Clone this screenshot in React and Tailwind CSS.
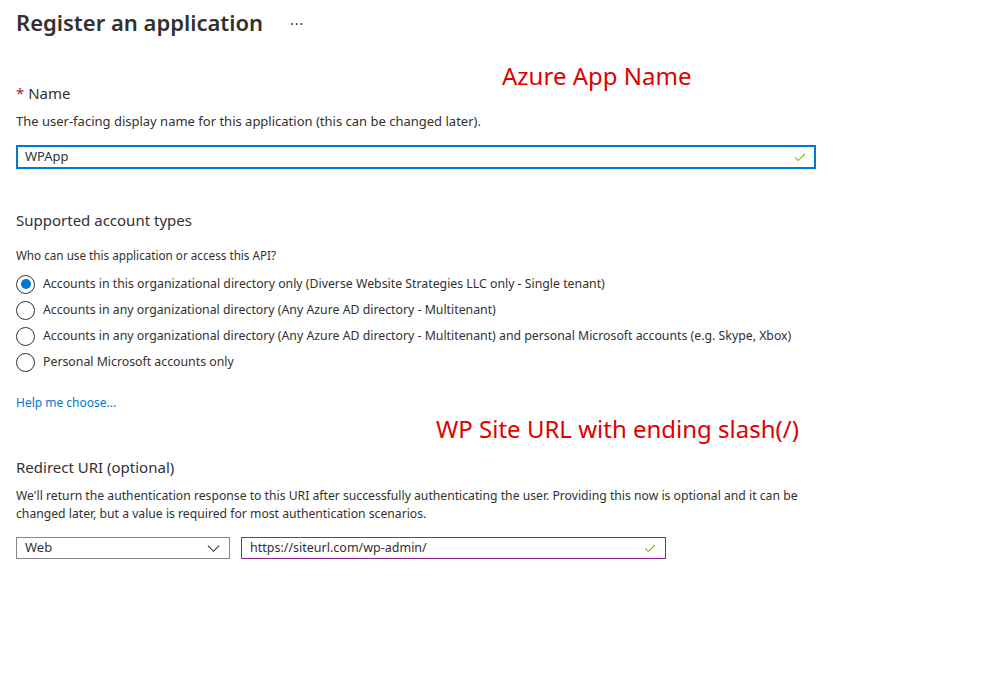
import React from "react";

const font = { fontFamily: '"Segoe UI", "Noto Sans", sans-serif' };

const Check = () => (
  <svg width="14" height="14" viewBox="0 0 16 16" className="shrink-0">
    <path d="M2.5 8.5l3.5 3.5 7.5-7.5" fill="none" stroke="#6bb700" strokeWidth="1.2" />
  </svg>
);

const Radio = ({ checked, label }) => (
  <label className="flex items-center gap-[8px] h-[26px]">
    <span className="w-[19px] h-[19px] rounded-full border border-[#323130] flex items-center justify-center">
      {checked && <span className="w-[10px] h-[10px] rounded-full bg-[#0078d4]" />}
    </span>
    <span className="text-[12.3px] text-[#323130]">{label}</span>
  </label>
);

export default function App() {
  const options = [
    "Accounts in this organizational directory only (Diverse Website Strategies LLC only - Single tenant)",
    "Accounts in any organizational directory (Any Azure AD directory - Multitenant)",
    "Accounts in any organizational directory (Any Azure AD directory - Multitenant) and personal Microsoft accounts (e.g. Skype, Xbox)",
    "Personal Microsoft accounts only",
  ];

  return (
    <div className="relative w-[1007px] h-[693px] bg-white text-[#323130]" style={font}>
      <div className="pl-[16px] pt-[6px]">
        {/* header */}
        <div className="flex items-center h-[32px]">
          <h1 className="text-[22px] font-semibold text-[#323130]">Register an application</h1>
          <span className="ml-[27px] text-[14px] tracking-[1px] mt-[2px]">···</span>
        </div>

        {/* name */}
        <div className="mt-[45px] text-[15px] leading-[20px]">
          <span className="text-[#a4262c]">*</span> Name
        </div>
        <p className="mt-[10px] text-[13px] leading-[16px]">
          The user-facing display name for this application (this can be changed later).
        </p>
        <div className="mt-[16px] w-[800px] h-[24px] border-2 border-[#0078d4] flex items-center px-[7px] justify-between">
          <span className="text-[13px]">WPApp</span>
          <Check />
        </div>

        {/* account types */}
        <div className="mt-[41px] text-[15px] leading-[20px]">Supported account types</div>
        <p className="mt-[17px] text-[11.7px] leading-[16px]">Who can use this application or access this API?</p>
        <div className="mt-[8px] flex flex-col">
          {options.map((o, i) => (
            <Radio key={i} checked={i === 0} label={o} />
          ))}
        </div>
        <a className="block mt-[19px] text-[12px] text-[#0078d4]">Help me choose...</a>

        {/* redirect */}
        <div className="mt-[45px] text-[15px] leading-[20px]">Redirect URI (optional)</div>
        <p className="mt-[10px] w-[800px] text-[12.2px] leading-[18px]">
          We'll return the authentication response to this URI after successfully authenticating the user. Providing this now is optional and it can be changed later, but a value is required for most authentication scenarios.
        </p>
        <div className="mt-[14px] flex gap-[11px]">
          <div className="w-[214px] h-[22px] border border-[#8a8886] flex items-center justify-between px-[8px]">
            <span className="text-[13px]">Web</span>
            <svg width="15" height="15" viewBox="0 0 16 16">
              <path d="M2 5l6 6 6-6" fill="none" stroke="#323130" strokeWidth="1.2" />
            </svg>
          </div>
          <div className="w-[425px] h-[22px] border border-[#8a2a8a] flex items-center justify-between px-[8px]">
            <span className="text-[12.5px]">https://siteurl.com/wp-admin/</span>
            <Check />
          </div>
        </div>
      </div>

      {/* callout labels */}
      <div className="absolute left-[502px] top-[58px] text-[24px] text-[#e00000]">Azure App Name</div>
      <div className="absolute left-[436px] top-[411px] text-[24px] text-[#e00000]">WP Site URL with ending slash(/)</div>
    </div>
  );
}
